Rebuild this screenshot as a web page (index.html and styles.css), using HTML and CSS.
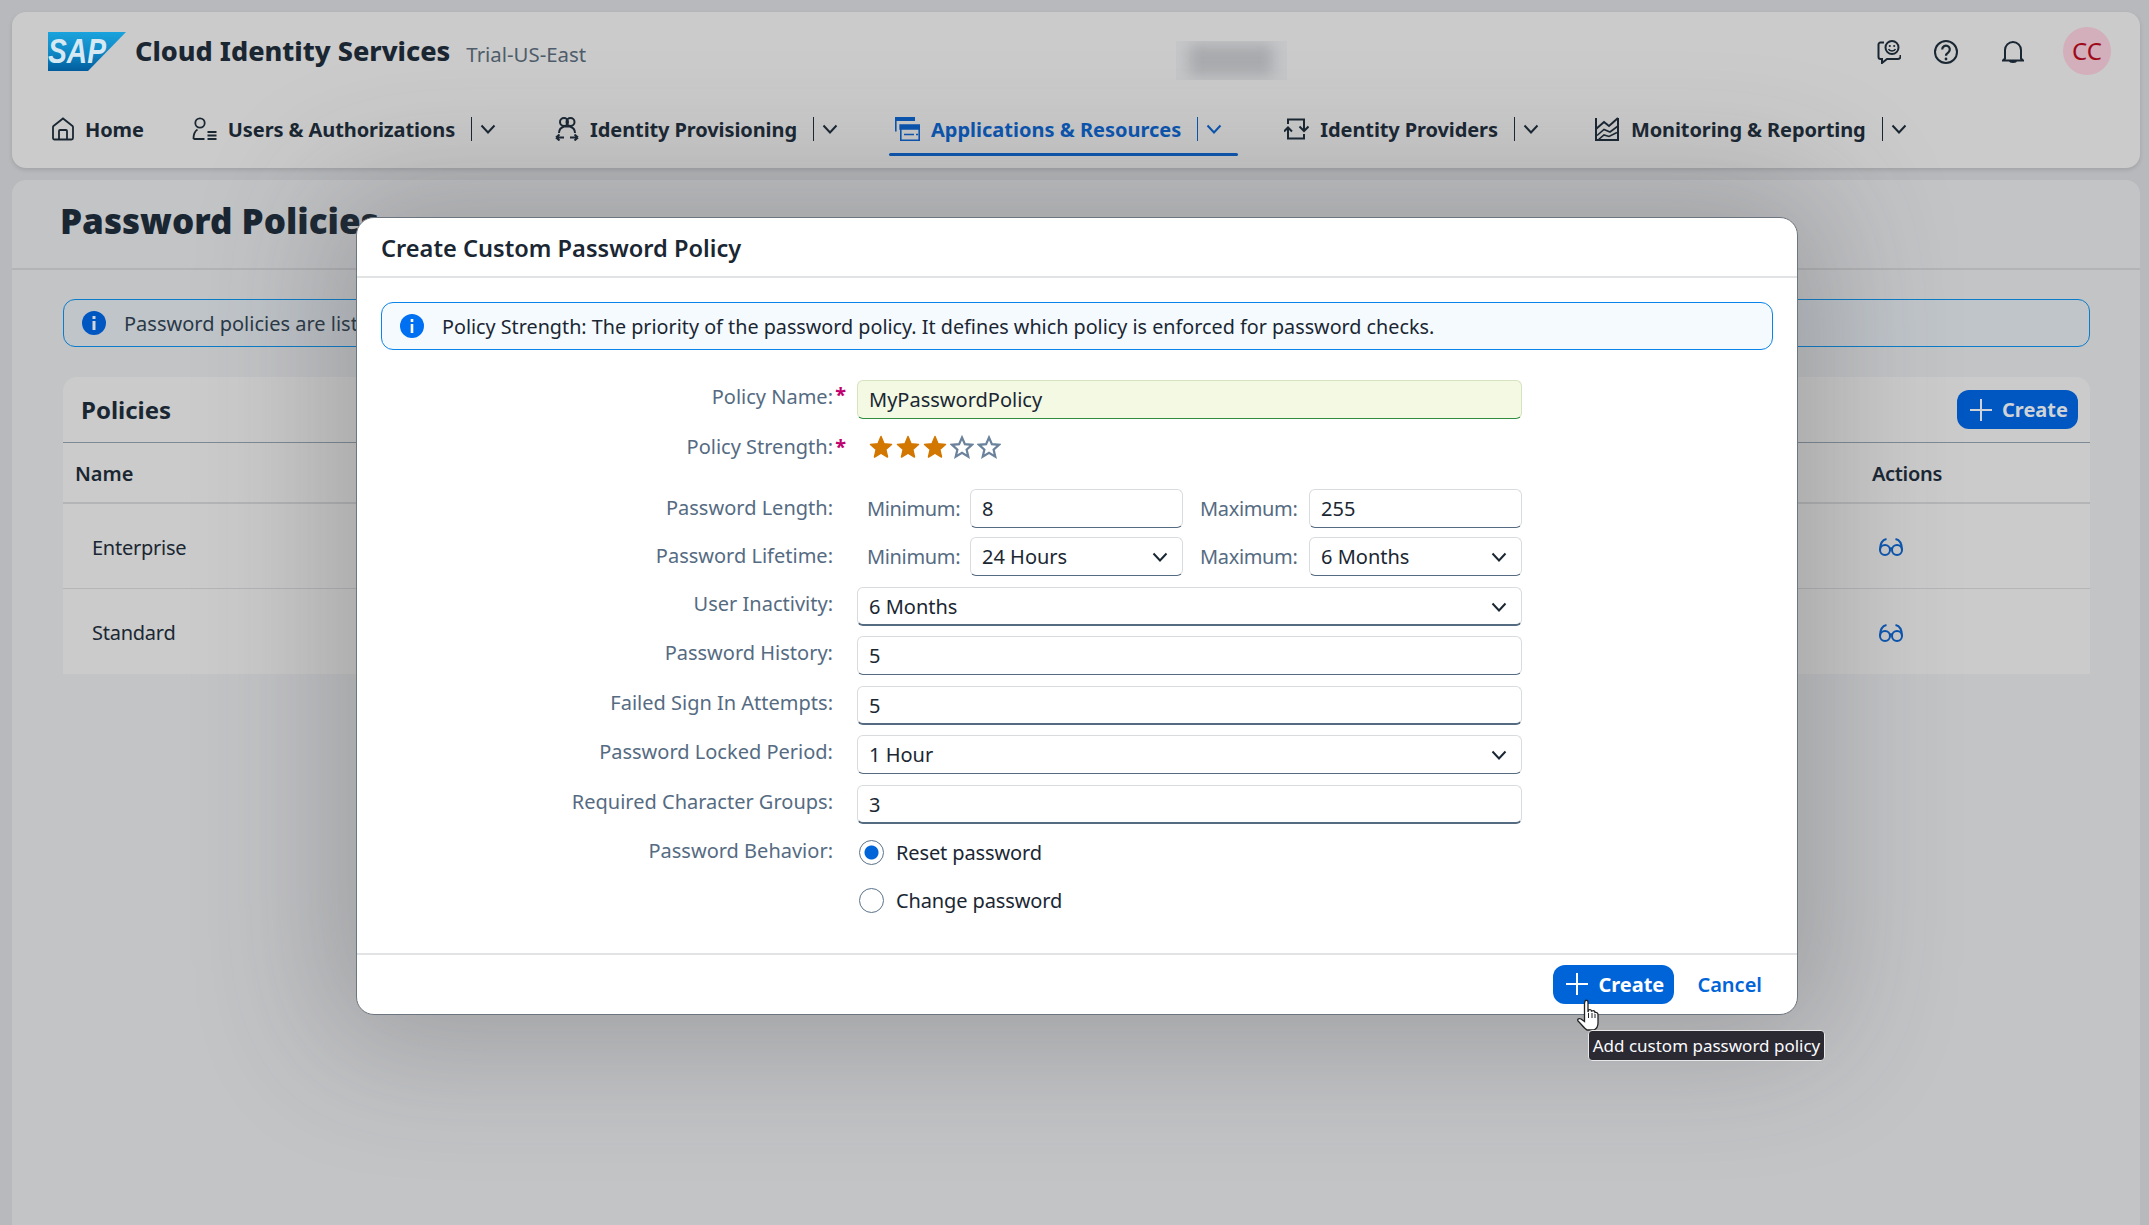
FILE: index.html
```html
<!DOCTYPE html>
<html lang="en">
<head>
<meta charset="utf-8">
<title>Password Policies</title>
<link rel="stylesheet" href="styles.css">
</head>
<body>
<header class="shell card">
  <div class="shell-top">
    <div class="brand">
      <svg class="logo" viewBox="0 0 78 39"><defs><linearGradient id="sapg" x1="0" y1="0" x2="0" y2="1"><stop offset="0" stop-color="#1aa3dc"/><stop offset=".55" stop-color="#0f86c4"/><stop offset="1" stop-color="#015c9c"/></linearGradient></defs><polygon points="0,0 78,0 40,39 0,39" fill="url(#sapg)"/><text x="0" y="31" class="logo-text" textLength="58" lengthAdjust="spacingAndGlyphs">SAP</text></svg>
      <span class="product">Cloud Identity Services</span>
      <span class="tenant">Trial-US-East</span>
    </div>
    <div class="blur-box"><div class="blur-inner"></div></div>
    <div class="tools">
      <svg class="tool fb" viewBox="0 0 24 24"><g fill="none" stroke="#1a2733" stroke-width="2"><path d="M7 2.500H3.500a2 2 0 0 0-2 2V17a2 2 0 0 0 2 2H5v4l5-4h11a2.500 2.500 0 0 0 2.500-2.500V15"/><circle cx="15" cy="7.500" r="6.500"/></g><circle cx="12.800" cy="6" r="1.100" fill="#1a2733"/><circle cx="17.200" cy="6" r="1.100" fill="#1a2733"/><path d="M11.500 9c1 2.500 6 2.500 7 0" fill="none" stroke="#1a2733" stroke-width="1.500"/></svg>
      <svg class="tool help" viewBox="0 0 24 24"><circle cx="12" cy="12" r="11" fill="none" stroke="#1a2733" stroke-width="2"/><path d="M8.200 9.500a3.800 3.800 0 1 1 6.200 2.900c-1.400 1-2.400 1.700-2.400 3.400" fill="none" stroke="#1a2733" stroke-width="2.200"/><circle cx="12" cy="19" r="1.400" fill="#1a2733"/></svg>
      <svg class="tool bell" viewBox="0 0 22 22"><path d="M3 17.500V9a8 8 0 0 1 16 0v8.500l2 2H1z" fill="none" stroke="#1a2733" stroke-width="2"/><path d="M7 19.500h8a4 2.500 0 0 1-8 0z" fill="#1a2733"/></svg>
      <div class="avatar">CC</div>
    </div>
  </div>
  <nav class="nav">
    <a class="nav-item home"><svg class="nav-icon" viewBox="0 0 22 23"><g fill="none" stroke="#1a2733" stroke-width="1.800"><path d="M1 20.500V9.500a1.500 1.500 0 0 1 .5-1L11 1l9.500 7.500a1.500 1.500 0 0 1 .5 1v11a1.500 1.500 0 0 1-1.500 1.500h-17A1.500 1.500 0 0 1 1 20.500z"/><path d="M7 22v-8.500a1 1 0 0 1 1-1h6a1 1 0 0 1 1 1V22"/></g></svg><span>Home</span></a>
    <a class="nav-item users"><svg class="nav-icon" viewBox="0 0 25 23"><g fill="none" stroke="#1a2733" stroke-width="1.800"><circle cx="8" cy="5.500" r="4.700"/><path d="M1.500 21.500c0-5 1.500-8 4-9.500M1.500 21.500h11"/><path d="M15.500 14.500h9M15.500 18h9M15.500 21.500h9"/></g></svg><span>Users &amp; Authorizations</span><i class="sep"></i><svg class="chev" viewBox="0 0 16 10"><path d="M1.500 1.500 8 8.500l6.500-7" /></svg></a>
    <a class="nav-item prov"><svg class="nav-icon" viewBox="0 0 24 24"><g fill="none" stroke="#1a2733" stroke-width="2"><circle cx="9" cy="5" r="4"/><circle cx="15.500" cy="5" r="4"/><path d="M4 16c0-3 2-5.500 5-6.500h6c3 1 5 3.500 5 6.500"/><path d="M1 20.500h8M1 20.500l3.500-3M1 20.500l3.500 3M23 20.500h-8M23 20.500l-3.500-3M23 20.500l-3.500 3"/></g></svg><span>Identity Provisioning</span><i class="sep"></i><svg class="chev" viewBox="0 0 16 10"><path d="M1.500 1.500 8 8.500l6.500-7"/></svg></a>
    <a class="nav-item apps active"><svg class="nav-icon" viewBox="0 0 26 24"><path d="M1 0h20v4H1z" fill="#0a55b0"/><path d="M1.800 3v11.500" stroke="#0a55b0" stroke-width="1.600"/><path d="M6.800 8.800h18.400v14.400H6.800z" fill="#cbcbcb" stroke="#0a55b0" stroke-width="1.600"/><path d="M6 8h20v4H6zM10 17.500h10M22 17.500h2" fill="#0a55b0" stroke="#0a55b0" stroke-width="1.300"/></svg><span>Applications &amp; Resources</span><i class="sep"></i><svg class="chev" viewBox="0 0 16 10"><path d="M1.500 1.500 8 8.500l6.500-7"/></svg></a>
    <a class="nav-item idp"><svg class="nav-icon" viewBox="0 0 25 22"><g fill="none" stroke="#1a2733" stroke-width="2"><path d="M4 6V1.500h16v11"/><path d="M15.500 8.500l4.500 4.500 4.500-4.500"/><path d="M4 9.500v11h16v-4.500"/><path d="M0 13.500l4-4 4 4"/></g></svg><span>Identity Providers</span><i class="sep"></i><svg class="chev" viewBox="0 0 16 10"><path d="M1.500 1.500 8 8.500l6.500-7"/></svg></a>
    <a class="nav-item mon"><svg class="nav-icon" viewBox="0 0 24 24"><g fill="none" stroke="#1a2733" stroke-width="2"><path d="M1 1v22h22V1"/><path d="M1 12l8-7 5 4 9-8"/></g><path d="M2 18.500l7-6 6 2.500 8-6M3 23l6-5 5 1.500 8-4" fill="none" stroke="#1a2733" stroke-width="1.600"/></svg><span>Monitoring &amp; Reporting</span><i class="sep"></i><svg class="chev" viewBox="0 0 16 10"><path d="M1.500 1.500 8 8.500l6.500-7"/></svg></a>
  </nav>
</header>

<main class="page card">
  <h1 class="page-title">Password Policies</h1>
  <div class="page-body">
    <div class="strip back-strip">
      <svg class="info" viewBox="0 0 24 24"><circle cx="12" cy="12" r="12" fill="#0057c2"/><rect x="10.500" y="10" width="3" height="9" fill="#d3d6da"/><rect x="10.500" y="5" width="3" height="3" fill="#d3d6da"/></svg>
      <span class="back-strip-text">Password policies are listed in order of priority.</span>
    </div>
    <section class="table-card">
      <div class="table-head">
        <span class="table-title">Policies</span>
        <span class="btn back-btn"><svg class="plus" viewBox="0 0 22 22"><path d="M11 0v22M0 11h22"/></svg>Create</span>
      </div>
      <div class="t-row t-cols"><span>Name</span><span class="act">Actions</span></div>
      <div class="t-row t-data"><span>Enterprise</span><svg class="glasses" viewBox="0 0 24 18"><g fill="none" stroke="#0a55b0" stroke-width="2"><circle cx="6" cy="12" r="5"/><circle cx="18" cy="12" r="5"/><path d="M10.500 11c1-1 2-1 3 0M1 12C1 7 3 2 7.500 1M23 12c0-5-2-10-6.500-11"/></g></svg></div>
      <div class="t-row t-data last"><span>Standard</span><svg class="glasses" viewBox="0 0 24 18"><g fill="none" stroke="#0a55b0" stroke-width="2"><circle cx="6" cy="12" r="5"/><circle cx="18" cy="12" r="5"/><path d="M10.500 11c1-1 2-1 3 0M1 12C1 7 3 2 7.500 1M23 12c0-5-2-10-6.500-11"/></g></svg></div>
    </section>
  </div>
</main>

<section class="modal">
  <h2 class="modal-title">Create Custom Password Policy</h2>
  <div class="modal-body">
    <div class="strip modal-strip">
      <svg class="info" viewBox="0 0 24 24"><circle cx="12" cy="12" r="12" fill="#0070f2"/><rect x="10.700" y="10" width="2.600" height="9" fill="#fff"/><rect x="10.700" y="5" width="2.600" height="3" fill="#fff"/></svg>
      <span>Policy Strength: The priority of the password policy. It defines which policy is enforced for password checks.</span>
    </div>
    <form class="form">
      <div class="row name-row"><label>Policy Name:<b>*</b></label><div class="field ok">MyPasswordPolicy</div></div>
      <div class="row stars-row"><label>Policy Strength:<b>*</b></label>
        <div class="stars">
          <svg viewBox="0 0 24 24"><path class="on" d="M12 1.500l3 7.200 7.500.7-5.700 5 1.700 7.600L12 18l-6.500 4 1.700-7.600-5.700-5 7.500-.7z"/></svg>
          <svg viewBox="0 0 24 24"><path class="on" d="M12 1.500l3 7.200 7.500.7-5.700 5 1.700 7.600L12 18l-6.500 4 1.700-7.600-5.700-5 7.500-.7z"/></svg>
          <svg viewBox="0 0 24 24"><path class="on" d="M12 1.500l3 7.200 7.500.7-5.700 5 1.700 7.600L12 18l-6.500 4 1.700-7.600-5.700-5 7.500-.7z"/></svg>
          <svg viewBox="0 0 24 24"><path class="off" d="M12 2.500l2.900 6.700 7.100.6-5.400 4.800 1.700 7.100-6.300-3.800-6.300 3.800 1.700-7.100L2 9.800l7.100-.6z"/></svg>
          <svg viewBox="0 0 24 24"><path class="off" d="M12 2.500l2.900 6.700 7.100.6-5.400 4.800 1.700 7.100-6.300-3.800-6.300 3.800 1.700-7.100L2 9.800l7.100-.6z"/></svg>
        </div>
      </div>
      <div class="row pair"><label>Password Length:</label>
        <div class="split"><span class="sub">Minimum:</span><div class="field">8</div><span class="sub sub2">Maximum:</span><div class="field">255</div></div></div>
      <div class="row pair2"><label>Password Lifetime:</label>
        <div class="split"><span class="sub">Minimum:</span><div class="field select">24 Hours<svg class="caret" viewBox="0 0 16 10"><path d="M1.500 1.500 8 8.500l6.500-7"/></svg></div><span class="sub sub2">Maximum:</span><div class="field select">6 Months<svg class="caret" viewBox="0 0 16 10"><path d="M1.500 1.500 8 8.500l6.500-7"/></svg></div></div></div>
      <div class="row"><label>User Inactivity:</label><div class="field select thick">6 Months<svg class="caret" viewBox="0 0 16 10"><path d="M1.500 1.500 8 8.500l6.500-7"/></svg></div></div>
      <div class="row"><label>Password History:</label><div class="field">5</div></div>
      <div class="row"><label>Failed Sign In Attempts:</label><div class="field thick">5</div></div>
      <div class="row"><label>Password Locked Period:</label><div class="field select">1 Hour<svg class="caret" viewBox="0 0 16 10"><path d="M1.500 1.500 8 8.500l6.500-7"/></svg></div></div>
      <div class="row"><label>Required Character Groups:</label><div class="field thick">3</div></div>
      <div class="row radio-row"><label>Password Behavior:</label><div class="radios">
        <div class="radio"><i class="dot checked"></i>Reset password</div>
        <div class="radio"><i class="dot"></i>Change password</div>
      </div></div>
    </form>
  </div>
  <footer class="modal-foot">
    <span class="btn"><svg class="plus" viewBox="0 0 22 22"><path d="M11 0v22M0 11h22"/></svg>Create</span>
    <span class="cancel">Cancel</span>
  </footer>
</section>

<svg class="cursor" viewBox="0 0 26 32"><path d="M8 2c1.500-1.500 3-.5 3 1v10l.5-2c1.500-1 3 0 3 1l.5 0c1.500-1 3 0 3 1.500 1.500-.5 3 .5 3 2V24c0 3-2 6-4 7H10c-2-1-5-5-9-9-1-2 1-3 3-2l3.500 2.500V4z" fill="#fff" stroke="#222" stroke-width="1.300"/><path d="M11.500 14v5M15 14v5M18 15v4" stroke="#222" stroke-width="1"/></svg>
<div class="tooltip">Add custom password policy</div>
</body>
</html>
```

FILE: styles.css
```css
* { box-sizing: border-box; }
html, body { margin: 0; height: 100%; }
body {
  width: 2149px; height: 1225px; overflow: hidden;
  padding: 12px 9px 0 12px;
  display: flex; flex-direction: column; gap: 12px;
  background: #b7b9bc;
  font-family: "Noto Sans", "Open Sans", sans-serif;
  font-size: 20px; color: #1a2733;
}
.card { background: #cbcbcb; border-radius: 14px 14px 0 0; }

/* shell */
.shell { height: 156px; flex: none; border-radius: 14px; padding: 20px 29px 0 36px; box-shadow: 0 2px 4px rgba(0,0,0,.12); }
.shell-top { height: 60px; display: flex; align-items: flex-start; position: relative; }
.brand { display: flex; align-items: center; width: 1128px; height: 39px; }
.logo { width: 78px; height: 39px; flex: none; margin-right: 9px; }
.logo-text { font: italic 700 35px "Liberation Sans", sans-serif; fill: #d6e8f2; }
.product { font-size: 27px; font-weight: 800; margin-top: -2px; }
.tenant { font-size: 20.400px; color: #4f5d6b; margin-left: 16px; margin-top: 4px; }
.blur-box { width: 111px; height: 39px; margin-top: 9px; background: #c6c7c9; overflow: hidden; }
.blur-inner { width: 84px; height: 32px; margin: 3px 13px; background: #a9abae; filter: blur(7px); }
.tools { margin-left: auto; display: flex; align-items: center; margin-top: -5px; }
.tool { flex: none; margin-top: 1px; }
.fb { width: 24px; height: 24px; margin-right: 33px; }
.help { width: 24px; height: 24px; margin-right: 44px; }
.bell { width: 22px; height: 22px; margin-right: 39px; }
.avatar { width: 48px; height: 48px; border-radius: 50%; background: #d3aebb; color: #9e0a1a; font-size: 24px; text-align: center; line-height: 48px; }

.nav { display: flex; height: 58px; margin: 17px 0 0 -32px; padding-left: 36px; }
.nav-item { display: flex; align-items: center; height: 40px; font-weight: 700; font-size: 20px; letter-spacing: -.1px; }
.nav-icon { width: 24px; height: 24px; flex: none; margin-right: 11px; }
.sep { width: 1px; height: 24px; background: #1a2733; margin: 0 8px 0 16px; }
.chev { width: 16px; height: 10px; fill: none; stroke: #1a2733; stroke-width: 2; }
.home { margin-right: 48px; }
.home .nav-icon { width: 22px; margin-right: 11px; }
.users { margin-right: 59px; }
.users .nav-icon { width: 25px; margin-right: 11px; }
.prov { margin-right: 51px; }
.apps { margin-right: 46px; color: #0a55b0; padding: 0 16px 0 5px; position: relative; letter-spacing: 0; }
.apps .nav-icon { width: 26px; margin-right: 11px; }
.apps .sep { background: #0a55b0; }
.apps .chev { stroke: #0a55b0; }
.apps::after { content: ""; position: absolute; left: 0; right: 0; top: 44px; height: 3px; background: #0a55b0; border-radius: 2px; }
.idp { margin-right: 56px; }
.idp .nav-icon { width: 25px; height: 22px; }
.mon .nav-icon { margin-right: 12px; }

/* page */
.page { flex: 1; background: #c3c4c6; }
.page-title { margin: 0; height: 90px; padding: 15px 0 0 48px; font-size: 35px; font-weight: 900; line-height: 52px; border-bottom: 2px solid #b3b4b6; }
.page-body { padding: 29px 50px 0 51px; }
.strip { display: flex; align-items: center; border: 1px solid #0a7cc9; border-radius: 12px; height: 48px; padding-left: 18px; gap: 18px; }
.back-strip { background: #c0c5ca; color: #2a3947; }
.info { width: 24px; height: 24px; flex: none; }
.table-card { margin-top: 30px; background: #cbcbcb; border-radius: 14px 14px 0 0; }
.table-head { height: 66px; padding: 0 12px 0 18px; display: flex; align-items: center; justify-content: space-between; border-bottom: 1px solid #7e8a95; }
.table-title { font-size: 24px; font-weight: 700; }
.btn { display: inline-flex; align-items: center; width: 121px; height: 39px; padding-left: 13px; border-radius: 12px; background: #0064d9; color: #fff; font-weight: 700; }
.back-btn { background: #0057c2; color: #cfd2d6; }
.plus { width: 22px; height: 22px; margin-right: 10px; fill: none; stroke: currentColor; stroke-width: 2; }
.t-row { display: flex; align-items: center; justify-content: space-between; }
.t-cols { height: 61px; padding: 2px 0 0 12px; font-weight: 600; border-bottom: 2px solid #b4b5b7; }
.act { margin-right: 148px; letter-spacing: -.3px; }
.t-data { height: 85px; padding: 2px 187px 0 29px; border-bottom: 1px solid #b4b5b7; letter-spacing: -.25px; }
.t-data.last { border-bottom: 0; }
.glasses { width: 24px; height: 18px; }

/* modal */
.modal {
  position: absolute; left: 356px; top: 217px; width: 1442px; height: 798px;
  background: #fff; border-radius: 18px; border: 1px solid #6d7680;
  box-shadow: 0 0 130px 30px rgba(60,62,66,.28);
}
.modal-title { margin: 0; height: 60px; padding-left: 24px; font-size: 23.600px; font-weight: 600; line-height: 60px; border-bottom: 2px solid #e2e3e5; }
.modal-body { padding: 24px 24px 0 24px; }
.modal-strip { background: #f5faff; border-color: #0a84ea; height: 48px; padding-left: 18px; gap: 18px; color: #1a2733; font-size: 19.750px; }
.form { margin-top: 30px; display: flex; flex-direction: column; gap: 10.500px; }
.row { display: flex; align-items: flex-start; }
.row label { width: 476px; padding-right: 24px; padding-top: 2px; line-height: 30px; text-align: right; color: #556b82; position: relative; flex: none; height: 30px; }
.row label b { position: absolute; right: 11px; top: 0; color: #c0006e; font-weight: 700; }
.row > .field { width: 665px; }
.field { height: 39px; border: 1px solid #d9dcdf; border-bottom: 1px solid #556b82; border-radius: 6px; padding: 0 11px; line-height: 37px; color: #1a2733; position: relative; }
.field.thick { border-bottom-width: 2px; }
.ok { background: #f3f9e3; border-color: #d5e3c0; border-bottom-color: #2f8f3e; }
.select .caret { position: absolute; right: 14px; top: 14px; width: 16px; height: 10px; fill: none; stroke: #1a2733; stroke-width: 2; }
.stars-row { margin-top: 2px; height: 30px; margin-bottom: 17px; }
.stars-row label { padding-top: 0; }
.stars { display: flex; gap: 3px; padding: 3px 0 0 12px; }
.stars svg { width: 24px; height: 24px; }
.stars .on { fill: #d27700; stroke: #d27700; stroke-width: 1.500; stroke-linejoin: round; }
.stars .off { fill: none; stroke: #6a829b; stroke-width: 2.200; }
.split { width: 665px; display: flex; align-items: center; }
.split .field { width: 213px; }
.sub { width: 113px; padding-left: 10px; color: #556b82; flex: none; letter-spacing: -.35px; }
.sub2 { width: 126px; padding-left: 17px; }
.pair { margin-bottom: -1.500px; }
.pair label, .pair2 label { padding-top: 4px; }
.radio-row { margin-top: 5px; }
.radio-row label { padding-top: 1px; margin-top: -4px; }
.radios { display: flex; flex-direction: column; gap: 23px; padding-top: 1px; }
.radio { display: flex; align-items: center; height: 25px; padding-left: 2px; gap: 12px; color: #1a2733; letter-spacing: -.12px; }
.dot { width: 25px; height: 25px; border-radius: 50%; border: 1.500px solid #5b738b; display: block; flex: none; }
.dot.checked { background: radial-gradient(circle, #0064d9 0 6.500px, #fff 7.500px); }
.modal-foot { position: absolute; left: 0; right: 0; bottom: 0; height: 61px; border-top: 2px solid #e2e3e5; display: flex; align-items: center; justify-content: flex-end; padding: 0 35px 1px 0; gap: 23px; }
.cancel { color: #0064d9; font-weight: 600; }

.cursor { position: absolute; left: 1577px; top: 999px; width: 26px; height: 32px; }
.tooltip { position: absolute; left: 1588px; top: 1030px; width: 237px; height: 31px; border: 1px solid #e8e8e8; border-radius: 4px; background: #2b2a33; color: #fbfbfe; font-size: 17px; line-height: 30px; text-align: center; white-space: nowrap; }
```
